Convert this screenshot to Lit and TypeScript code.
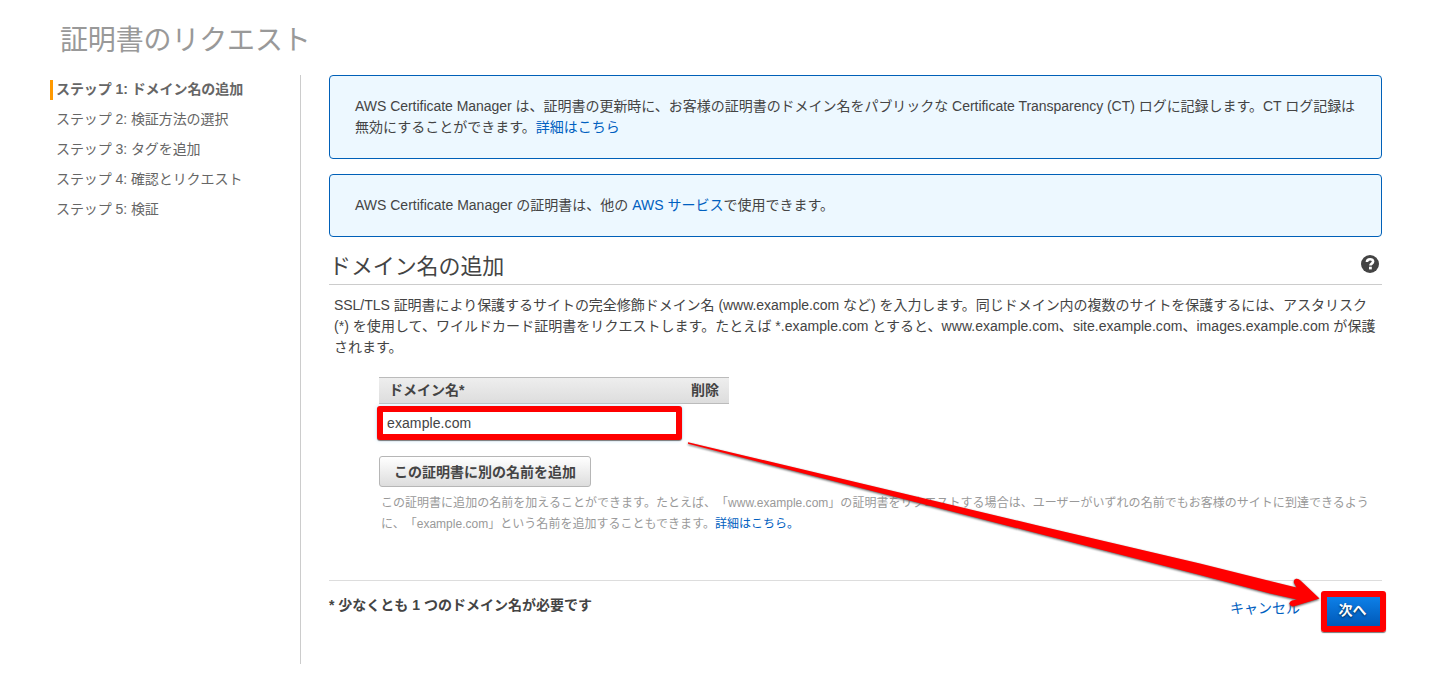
import { LitElement, html, css, svg } from "lit";
import { customElement } from "lit/decorators.js";

@customElement("app-root")
export class AppRoot extends LitElement {
  static styles = css`
    :host {
      display: block;
      position: relative;
      width: 1440px;
      height: 694px;
      overflow: hidden;
      background: #fff;
      color: #444;
      font: 14px/21px "Liberation Sans", "Noto Sans CJK JP", sans-serif;
      text-spacing-trim: space-all;
    }
    * { box-sizing: border-box; }
    h1, h2, p, ol { margin: 0; padding: 0; font-weight: 400; }
    ol { list-style: none; }
    a { color: #0060c0; text-decoration: none; }
    .title { height: 75px; padding: 22px 0 0 60px; font-size: 28px; line-height: 38px; letter-spacing: -0.15px; color: #999; }
    .page { display: flex; height: 589px; }
    .steps { width: 301px; padding: 5px 0 0 50px; border-right: 1px solid #ccc; color: #666; }
    .step { height: 20px; margin-bottom: 10px; padding-left: 3px; border-left: 3px solid transparent; line-height: 19px; letter-spacing: -0.07px; white-space: nowrap; }
    .current { border-left-color: #ff9900; font-weight: 700; }
    .main { width: 1053px; margin-left: 28px; }
    .line { display: block; width: max-content; white-space: nowrap; }
    .l1 { letter-spacing: -0.03px; }
    .p1 { letter-spacing: -0.035px; }
    .p2 { letter-spacing: 0.038px; }
    .h1 { letter-spacing: 0.02px; }
    .info { border: 1px solid #0060b8; border-radius: 4px; background: #edf8ff; padding: 20px 25px 0; }
    .tall { height: 84px; margin-bottom: 15px; }
    .short { height: 63px; }
    .heading { display: flex; justify-content: space-between; height: 48px; padding: 11px 2px 0 0; border-bottom: 1px solid #ccc; }
    .heading h2 { font-size: 22px; line-height: 38px; letter-spacing: -0.1px; }
    .help { display: block; width: 20px; height: 20px; margin-top: 6px; }
    .intro { padding: 10px 0 0 5px; height: 92px; }
    .form { padding-left: 50px; height: 203px; }
    .thead { display: flex; justify-content: space-between; width: 350px; height: 27px; padding: 0 10px; border: solid #bbb; border-width: 1px 0; background: linear-gradient(#eee, #ddd); font-weight: 700; line-height: 25px; }
    .field { display: flex; align-items: center; width: 305px; height: 34px; margin: 2px 0 0 -2px; padding-left: 4px; border: 6px solid #f00; border-radius: 3px; box-shadow: 0 1px 1px #777, 0 0 5px #c9e8ff; background: #fff; letter-spacing: 0.1px; }
    .add { display: block; width: 212px; height: 31px; margin: 16px 0 6px; padding: 0; border: 1px solid #b6b6b6; border-radius: 3px; background: linear-gradient(#fff, #ddd); color: #444; font: inherit; font-weight: 700; line-height: 28px; }
    .hint { padding-left: 2px; font-size: 12px; color: #999; }
    .footer { display: flex; border-top: 1px solid #ddd; height: 60px; }
    .note { padding-top: 14px; font-weight: 700; }
    .cancel { margin: 17px 21px 0 auto; }
    .next { display: block; width: 65px; height: 41px; margin: 10px -4px 0 0; padding: 0 2px 3px 0; border: 6px solid #f00; border-radius: 3px; background: linear-gradient(#0d80e8, #0059b8) padding-box; box-shadow: 0 1px 1px #777; color: #fff; font: inherit; font-weight: 700; line-height: 26px; text-shadow: 0 1px 2px #024; }
    .arrow { position: absolute; left: 0; top: 0; width: 1440px; height: 694px; pointer-events: none; filter: drop-shadow(0 1px 1px #555); }
  `;

  private steps = [
    "ステップ 1: ドメイン名の追加",
    "ステップ 2: 検証方法の選択",
    "ステップ 3: タグを追加",
    "ステップ 4: 確認とリクエスト",
    "ステップ 5: 検証",
  ];

  render() {
    return html`
      <h1 class="title">証明書のリクエスト</h1>
      <div class="page">
        <ol class="steps">
          ${this.steps.map((s, i) => html`<li class="step ${i === 0 ? "current" : ""}">${s}</li>`)}
        </ol>
        <div class="main">
          <div class="info tall">
            <span class="line l1">AWS Certificate Manager は、証明書の更新時に、お客様の証明書のドメイン名をパブリックな Certificate Transparency (CT) ログに記録します。CT ログ記録は</span>
            <span class="line">無効にすることができます。<a>詳細はこちら</a></span>
          </div>
          <div class="info short"><span class="line">AWS Certificate Manager の証明書は、他の <a>AWS サービス</a>で使用できます。</span></div>
          <div class="heading">
            <h2>ドメイン名の追加</h2>
            <svg class="help" viewBox="0 0 20 20">
              <circle cx="10" cy="10" r="9" fill="#444" />
              <path d="M6.900 8C7 5.900 8.300 5.200 10.100 5.200c1.800 0 3 .9 3 2.300 0 2.100-2.700 2.100-2.700 4.100" fill="none" stroke="#fff" stroke-width="2.600" />
              <rect x="9" y="12.700" width="2.800" height="2.700" fill="#fff" />
            </svg>
          </div>
          <p class="intro">
            <span class="line p1">SSL/TLS 証明書により保護するサイトの完全修飾ドメイン名 (www.example.com など) を入力します。同じドメイン内の複数のサイトを保護するには、アスタリスク</span>
            <span class="line p2">(*) を使用して、ワイルドカード証明書をリクエストします。たとえば *.example.com とすると、www.example.com、site.example.com、images.example.com が保護</span>
            <span class="line">されます。</span>
          </p>
          <div class="form">
            <div class="thead"><span>ドメイン名*</span><span>削除</span></div>
            <div class="field">example.com</div>
            <button class="add">この証明書に別の名前を追加</button>
            <p class="hint">
              <span class="line h1">この証明書に追加の名前を加えることができます。たとえば、「www.example.com」の証明書をリクエストする場合は、ユーザーがいずれの名前でもお客様のサイトに到達できるよう</span>
              <span class="line h1">に、「example.com」という名前を追加することもできます。<a>詳細はこちら。</a></span>
            </p>
          </div>
          <div class="footer">
            <span class="note">* 少なくとも 1 つのドメイン名が必要です</span>
            <a class="cancel">キャンセル</a>
            <button class="next">次へ</button>
          </div>
        </div>
      </div>
      <svg class="arrow" viewBox="0 0 1440 694">
        ${svg`<path fill="#f00" d="M688 442.2L1040 526L1200 563.500L1270 581L1296.500 587.500L1294 583Q1293 579.500 1296 578.800Q1298.500 578.300 1300.500 580.500L1319.500 598.500L1294 606.300Q1290.500 606.800 1289.500 604Q1289 601.500 1292 600.500L1297 599.500L1270 593.500L1200 575L1040 534L688 443.8Z"/>`}
      </svg>
    `;
  }
}
